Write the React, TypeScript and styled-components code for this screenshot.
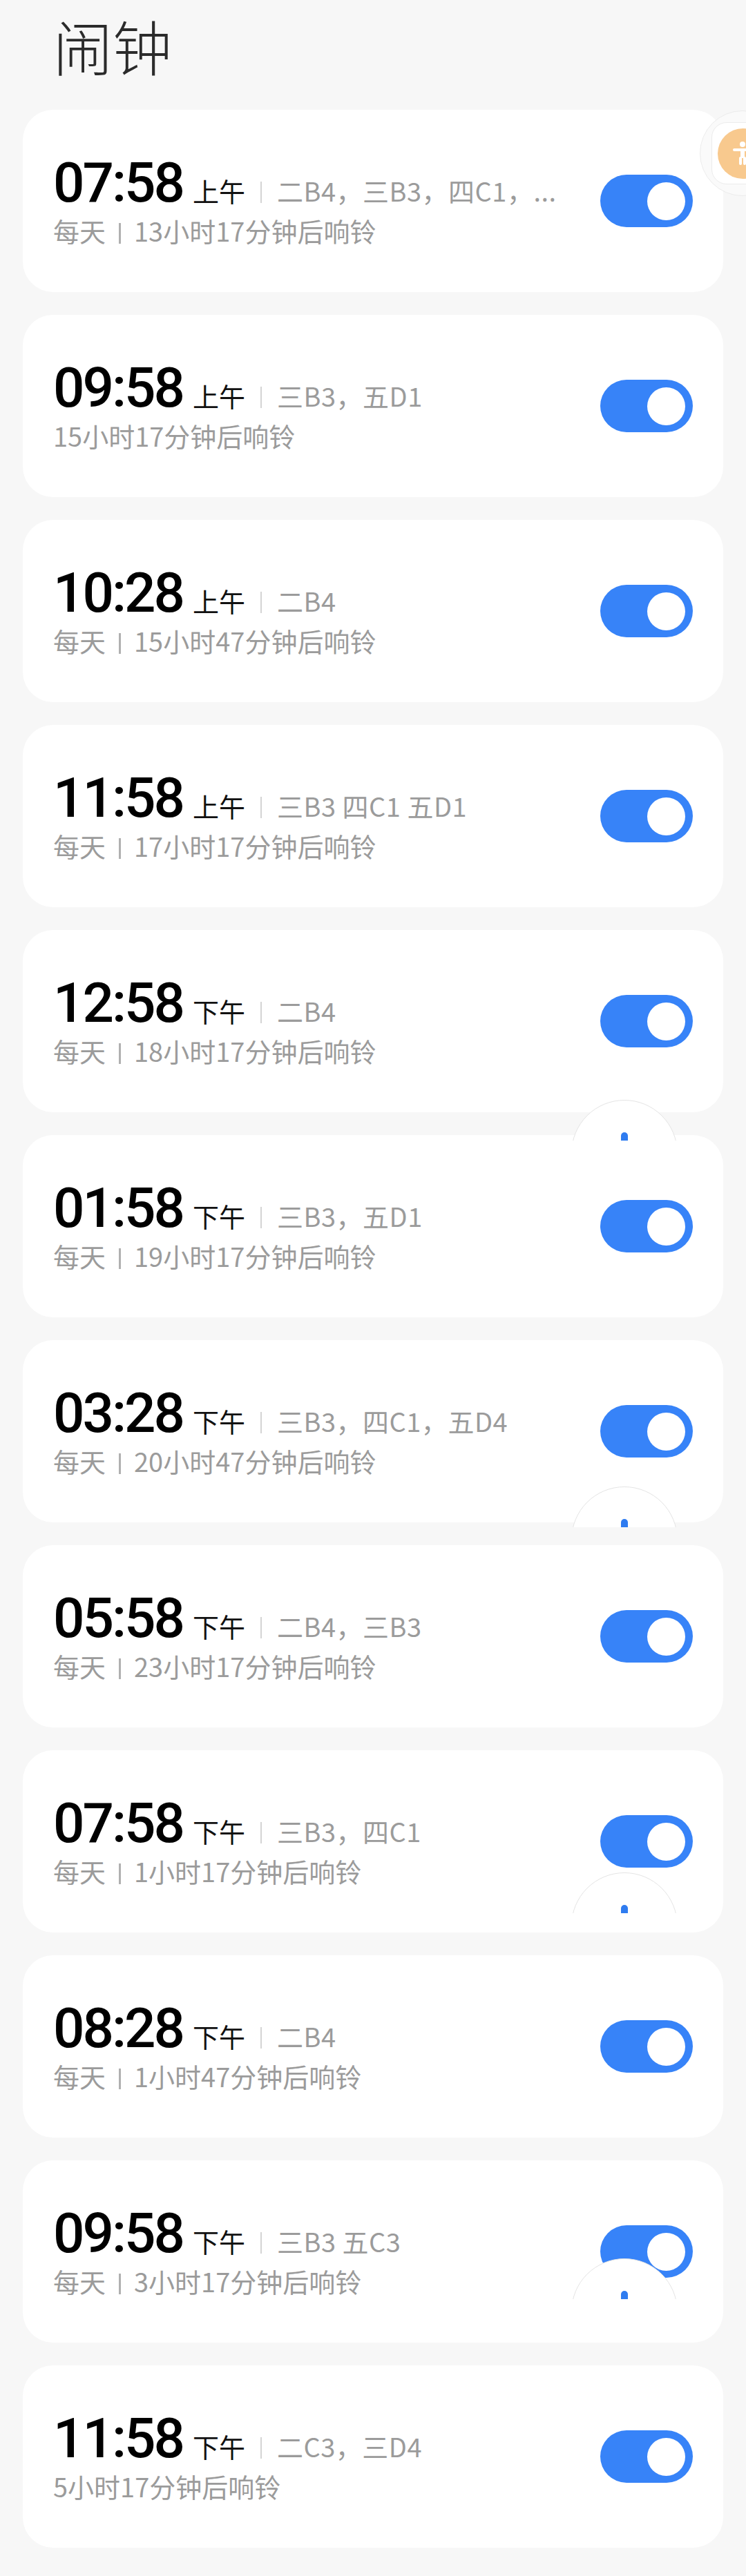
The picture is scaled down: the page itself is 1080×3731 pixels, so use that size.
import React from 'react';
import styled, { createGlobalStyle } from 'styled-components';

const GlobalStyle = createGlobalStyle`
  html, body {
    margin: 0;
    padding: 0;
    background: #f7f7f7;
  }
  * {
    box-sizing: border-box;
  }
`;

type Alarm = {
  time: string;
  period: string;
  days: string;
  repeat?: string;
  remain: string;
};

const alarms: Alarm[] = [
  { time: '07:58', period: '上午', days: '二B4，三B3，四C1，...', repeat: '每天', remain: '13小时17分钟后响铃' },
  { time: '09:58', period: '上午', days: '三B3，五D1', remain: '15小时17分钟后响铃' },
  { time: '10:28', period: '上午', days: '二B4', repeat: '每天', remain: '15小时47分钟后响铃' },
  { time: '11:58', period: '上午', days: '三B3 四C1 五D1', repeat: '每天', remain: '17小时17分钟后响铃' },
  { time: '12:58', period: '下午', days: '二B4', repeat: '每天', remain: '18小时17分钟后响铃' },
  { time: '01:58', period: '下午', days: '三B3，五D1', repeat: '每天', remain: '19小时17分钟后响铃' },
  { time: '03:28', period: '下午', days: '三B3，四C1，五D4', repeat: '每天', remain: '20小时47分钟后响铃' },
  { time: '05:58', period: '下午', days: '二B4，三B3', repeat: '每天', remain: '23小时17分钟后响铃' },
  { time: '07:58', period: '下午', days: '三B3，四C1', repeat: '每天', remain: '1小时17分钟后响铃' },
  { time: '08:28', period: '下午', days: '二B4', repeat: '每天', remain: '1小时47分钟后响铃' },
  { time: '09:58', period: '下午', days: '三B3 五C3', repeat: '每天', remain: '3小时17分钟后响铃' },
  { time: '11:58', period: '下午', days: '二C3，三D4', remain: '5小时17分钟后响铃' },
];

// leftover floating handles seen over the list
const domeTops = [1593, 2153, 2712, 3271];

export default function App() {
  return (
    <Page>
      <GlobalStyle />
      <Title>闹钟</Title>
      <List>
        {alarms.map((a, i) => (
          <Card key={i}>
            <Info>
              <TopLine>
                <Time>{a.time}</Time>
                <Period>{a.period}</Period>
                <Divider />
                <Days>{a.days}</Days>
              </TopLine>
              <SubLine>
                {a.repeat && (
                  <>
                    <span>{a.repeat}</span>
                    <SubDivider />
                  </>
                )}
                <span>{a.remain}</span>
              </SubLine>
            </Info>
            <Switch $on>
              <Knob />
            </Switch>
          </Card>
        ))}
      </List>

      {domeTops.map((top) => (
        <Dome key={top} style={{ top }}>
          <DomeDot />
        </Dome>
      ))}

      <FloatBall>
        <FloatInner>
          <FloatIcon>
            <svg width="40" height="40" viewBox="0 0 40 40" fill="#fff">
              <circle cx="20" cy="7" r="4" />
              <rect x="6" y="13" width="28" height="4" rx="2" />
              <rect x="17" y="15" width="6" height="12" rx="2" />
              <rect x="15" y="25" width="4" height="12" rx="2" />
              <rect x="21" y="25" width="4" height="12" rx="2" />
            </svg>
          </FloatIcon>
        </FloatInner>
      </FloatBall>
    </Page>
  );
}

const Page = styled.div`
  position: relative;
  width: 1080px;
  min-height: 3731px;
  overflow: hidden;
  padding: 0 33px 44px;
  background: #f7f7f7;
  font-family: 'Noto Sans CJK SC', 'Noto Sans', sans-serif;
`;

const Title = styled.h1`
  margin: 0;
  padding: 24px 0 51px 44px;
  font-size: 86px;
  line-height: 84px;
  font-weight: 200;
  color: #2b2b2b;
`;

const List = styled.div`
  display: flex;
  flex-direction: column;
  gap: 33px;
`;

const Card = styled.div`
  height: 264px;
  background: #fff;
  border-radius: 44px;
  display: flex;
  align-items: center;
  justify-content: space-between;
  padding: 0 44px 0 44px;
`;

const Info = styled.div`
  display: flex;
  flex-direction: column;
  min-width: 0;
`;

const TopLine = styled.div`
  display: flex;
  align-items: baseline;
  white-space: nowrap;
`;

const Time = styled.span`
  font-family: Roboto, 'Liberation Sans', sans-serif;
  font-size: 80px;
  line-height: 80px;
  font-weight: 500;
  letter-spacing: -3px;
  color: #000;
`;

const Period = styled.span`
  margin-left: 14px;
  font-size: 38px;
  color: #111;
`;

const Divider = styled.span`
  display: inline-block;
  width: 2px;
  height: 31px;
  margin: 0 22px;
  background: #d4d4d4;
  transform: translateY(2px);
`;

const Days = styled.span`
  font-size: 38px;
  letter-spacing: 0.5px;
  color: #9b9b9b;
`;

const SubLine = styled.div`
  display: flex;
  align-items: baseline;
  margin-top: 5px;
  font-size: 38px;
  line-height: 48px;
  color: #9b9b9b;
  white-space: nowrap;
`;

const SubDivider = styled.span`
  display: inline-block;
  width: 3px;
  height: 30px;
  margin: 0 19px;
  background: #b0b0b0;
  transform: translateY(3px);
`;

const Switch = styled.div<{ $on?: boolean }>`
  flex: none;
  width: 134px;
  height: 76px;
  border-radius: 38px;
  background: ${(p) => (p.$on ? '#3783f8' : '#e3e3e3')};
  display: flex;
  align-items: center;
  justify-content: ${(p) => (p.$on ? 'flex-end' : 'flex-start')};
  padding: 0 11px;
`;

const Knob = styled.span`
  width: 55px;
  height: 55px;
  border-radius: 50%;
  background: #fff;
`;

const Dome = styled.div`
  position: absolute;
  left: 827px;
  width: 154px;
  height: 59px;
  overflow: hidden;

  &::before {
    content: '';
    position: absolute;
    left: 0;
    top: 0;
    width: 154px;
    height: 154px;
    border-radius: 50%;
    background: #fff;
    border: 1.5px solid #e4e4e4;
    box-sizing: border-box;
  }
`;

const DomeDot = styled.span`
  position: absolute;
  left: 72px;
  bottom: 0;
  width: 10px;
  height: 12px;
  border-radius: 5px 5px 0 0;
  background: #2f7cf0;
`;

const FloatBall = styled.div`
  position: absolute;
  left: 1013px;
  top: 160px;
  width: 124px;
  height: 124px;
  border-radius: 50%;
  background: rgba(250, 250, 250, 0.9);
  border: 1px solid #ececec;
  display: flex;
  align-items: center;
  justify-content: center;
`;

const FloatInner = styled.div`
  width: 90px;
  height: 90px;
  border-radius: 22px;
  background: #fff;
  border: 1px solid #ececec;
  display: flex;
  align-items: center;
  justify-content: center;
`;

const FloatIcon = styled.div`
  width: 73px;
  height: 73px;
  border-radius: 50%;
  background: #f8c98e;
  display: flex;
  align-items: center;
  justify-content: center;
`;
